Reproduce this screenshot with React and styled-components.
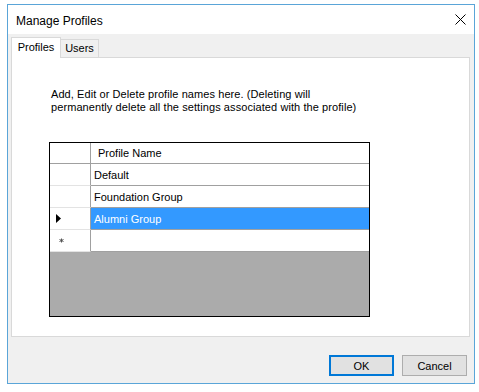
import React from "react";
import styled, { createGlobalStyle } from "styled-components";

const GlobalStyle = createGlobalStyle`
  html, body { margin: 0; padding: 0; background: #ffffff; }
  body { font-family: "Liberation Sans", Arial, sans-serif; font-size: 11px; color: #000; }
  * { box-sizing: border-box; }
`;

const Window = styled.div`
  margin: 4px 0 0 7px;
  width: 468px;
  height: 380px;
  border: 1px solid #5aa5d8;
  background: #f0f0f0;
  display: flex;
  flex-direction: column;
`;

const TitleBar = styled.div`
  height: 29px;
  background: #ffffff;
  display: flex;
  align-items: center;
  justify-content: space-between;
  padding: 0 8px 0 8px;
`;

const Title = styled.div`
  font-size: 12px;
  color: #000;
  padding-top: 2px;
`;

const CloseButton = styled.div`
  width: 12px;
  height: 12px;
  display: flex;
  align-items: center;
  justify-content: center;
`;

const Client = styled.div`
  flex: 1;
  display: flex;
  flex-direction: column;
  padding: 4px 4px 0 3px;
`;

const TabStrip = styled.div`
  display: flex;
  align-items: flex-end;
  height: 20px;
  margin-bottom: -1px;
  position: relative;
  z-index: 1;
`;

const Tab = styled.div`
  display: flex;
  align-items: flex-start;
  justify-content: center;
  width: ${(p) => (p.$active ? 50 : 38)}px;
  height: ${(p) => (p.$active ? 21 : 19)}px;
  padding-top: ${(p) => (p.$active ? 3 : 2)}px;
  background: ${(p) => (p.$active ? "#ffffff" : "#f0f0f0")};
  border: 1px solid #d9d9d9;
  border-bottom: ${(p) => (p.$active ? "none" : "1px solid #d9d9d9")};
  border-left: ${(p) => (p.$first ? "1px solid #d9d9d9" : "none")};
  font-size: 11px;
`;

const Panel = styled.div`
  width: 459px;
  height: 280px;
  background: #ffffff;
  border: 1px solid #d9d9d9;
  padding: 30px 0 0 37px;
  display: flex;
  flex-direction: column;
`;

const Info = styled.p`
  margin: 0;
  padding-left: 2px;
  line-height: 13px;
  font-size: 11px;
  letter-spacing: 0.08px;
`;

const Grid = styled.div`
  margin-top: 28px;
  width: 321px;
  height: 175px;
  border: 1px solid #000;
  background: #ababab;
  display: flex;
  flex-direction: column;
`;

const Row = styled.div`
  display: flex;
  height: ${(p) => (p.$header ? 21 : 22)}px;
`;

const RowHeader = styled.div`
  width: 41px;
  background: #ffffff;
  border-right: 1px solid #a0a0a0;
  border-bottom: 1px solid ${(p) => (p.$header ? "#a0a0a0" : "#e3e3e3")};
  display: flex;
  align-items: center;
  padding-left: ${(p) => p.$indent || 0}px;
`;

const Cell = styled.div`
  flex: 1;
  border-bottom: 1px solid #a0a0a0;
  background: ${(p) => (p.$selected ? "#3399ff" : "#ffffff")};
  color: ${(p) => (p.$selected ? "#ffffff" : "#000000")};
  padding-left: ${(p) => (p.$header ? 7 : 3)}px;
  line-height: ${(p) => (p.$header ? 21 : 22)}px;
  font-size: 11px;
  white-space: nowrap;
`;

const ButtonRow = styled.div`
  display: flex;
  justify-content: flex-end;
  gap: 8px;
  margin-top: 18px;
  padding-right: 3px;
`;

const Button = styled.button`
  width: 65px;
  height: 21px;
  padding: 0;
  background: #e1e1e1;
  border: ${(p) => (p.$default ? "2px solid #0078d7" : "1px solid #adadad")};
  font-family: "Liberation Sans", Arial, sans-serif;
  font-size: 11px;
  color: #000;
  display: flex;
  align-items: center;
  justify-content: center;
`;

const rows = [
  { name: "Default" },
  { name: "Foundation Group" },
  { name: "Alumni Group", selected: true },
  { name: "", isNew: true },
];

export default function App() {
  return (
    <>
      <GlobalStyle />
      <Window>
        <TitleBar>
          <Title>Manage Profiles</Title>
          <CloseButton>
            <svg width="11" height="11" viewBox="0 0 11 11">
              <path d="M0.5 0.5 L10.5 10.5 M10.5 0.5 L0.5 10.5" stroke="#000" strokeWidth="1" fill="none" />
            </svg>
          </CloseButton>
        </TitleBar>
        <Client>
          <TabStrip>
            <Tab $active $first>Profiles</Tab>
            <Tab>Users</Tab>
          </TabStrip>
          <Panel>
            <Info>
              Add, Edit or Delete profile names here. (Deleting will
              <br />
              permanently delete all the settings associated with the profile)
            </Info>
            <Grid>
              <Row $header>
                <RowHeader $header />
                <Cell $header>Profile Name</Cell>
              </Row>
              {rows.map((r, i) => (
                <Row key={i}>
                  <RowHeader $indent={r.selected ? 6 : r.isNew ? 9 : 0}>
                    {r.selected && (
                      <svg width="5" height="9" viewBox="0 0 5 9">
                        <path d="M0 0 L5 4.5 L0 9 Z" fill="#000" />
                      </svg>
                    )}
                    {r.isNew && (
                      <svg width="5" height="5" viewBox="0 0 5 5">
                        <path d="M2.5 0.5 V4.5 M0.5 1.5 L4.5 3.5 M4.5 1.5 L0.5 3.5" stroke="#555" strokeWidth="1" fill="none" />
                      </svg>
                    )}
                  </RowHeader>
                  <Cell $selected={r.selected}>{r.name}</Cell>
                </Row>
              ))}
            </Grid>
          </Panel>
          <ButtonRow>
            <Button $default>OK</Button>
            <Button>Cancel</Button>
          </ButtonRow>
        </Client>
      </Window>
    </>
  );
}
